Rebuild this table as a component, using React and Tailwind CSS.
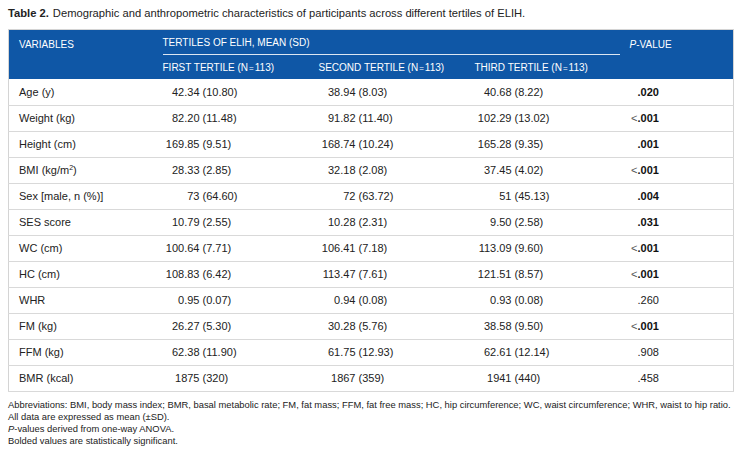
import React from 'react';

const rows = [
  { label: 'Age (y)', vals: [['42.34', '10.80'], ['38.94', '8.03'], ['40.68', '8.22']], p: '.020', bold: true },
  { label: 'Weight (kg)', vals: [['82.20', '11.48'], ['91.82', '11.40'], ['102.29', '13.02']], p: '.001', lt: true, bold: true },
  { label: 'Height (cm)', vals: [['169.85', '9.51'], ['168.74', '10.24'], ['165.28', '9.35']], p: '.001', bold: true },
  { label: 'BMI', sup: true, vals: [['28.33', '2.85'], ['32.18', '2.08'], ['37.45', '4.02']], p: '.001', lt: true, bold: true },
  { label: 'Sex [male, n (%)]', vals: [['73', '64.60'], ['72', '63.72'], ['51', '45.13']], p: '.004', bold: true },
  { label: 'SES score', vals: [['10.79', '2.55'], ['10.28', '2.31'], ['9.50', '2.58']], p: '.031', bold: true },
  { label: 'WC (cm)', vals: [['100.64', '7.71'], ['106.41', '7.18'], ['113.09', '9.60']], p: '.001', lt: true, bold: true },
  { label: 'HC (cm)', vals: [['108.83', '6.42'], ['113.47', '7.61'], ['121.51', '8.57']], p: '.001', lt: true, bold: true },
  { label: 'WHR', vals: [['0.95', '0.07'], ['0.94', '0.08'], ['0.93', '0.08']], p: '.260' },
  { label: 'FM (kg)', vals: [['26.27', '5.30'], ['30.28', '5.76'], ['38.58', '9.50']], p: '.001', lt: true, bold: true },
  { label: 'FFM (kg)', vals: [['62.38', '11.90'], ['61.75', '12.93'], ['62.61', '12.14']], p: '.908' },
  { label: 'BMR (kcal)', vals: [['1875', '320'], ['1867', '359'], ['1941', '440']], p: '.458' },
];

// mean right-aligned so the "(" lines up in each column
const Value = ({ mean, sd }) => (
  <div className="flex">
    <span className="w-[47px] text-right">{mean}</span>
    <span className="pl-[3px]">({sd})</span>
  </div>
);

const PValue = ({ p, lt, bold }) => (
  <div className="flex">
    <span className="w-[18px] text-right text-[#555] font-light">{lt ? '<' : ''}</span>
    <span className={bold ? 'font-bold text-[#111]' : ''}>{p}</span>
  </div>
);

export default function App() {
  return (
    <div
      className="w-[742px] h-[452px] bg-white px-[8px] pt-[6px] text-[#222]"
      style={{ fontFamily: '"Liberation Sans", Arial, sans-serif' }}
    >
      <p className="text-[11.2px] leading-[14px] text-[#222]">
        <span className="font-bold">Table 2.</span>
        <span className="pl-[4px]">Demographic and anthropometric characteristics of participants across different tertiles of ELIH.</span>
      </p>

      <table className="mt-[9px] w-[725px] border-collapse border border-[#d4d4d4] text-[11px] table-fixed">
        <colgroup>
          <col className="w-[144px]" />
          <col className="w-[156px]" />
          <col className="w-[156px]" />
          <col className="w-[155px]" />
          <col className="w-[114px]" />
        </colgroup>
        <thead className="bg-[#0f57a6] text-white text-[10px] uppercase text-left">
          <tr>
            <th rowSpan={2} className="align-top font-normal pl-[10px] pt-[7px]">Variables</th>
            <th colSpan={3} className="font-normal p-0 h-[25px] align-middle">
              <div className="ml-[10px] h-[25px] flex items-center border-b border-[#dce6f2]">
                Tertiles of ELIH, mean (SD)
              </div>
            </th>
            <th rowSpan={2} className="align-top font-normal pl-[10px] pt-[7px]">
              <i>P</i>-value
            </th>
          </tr>
          <tr className="h-[24px]">
            <th className="font-normal pl-[10px]">First tertile (N<span className="px-[1px] text-[8px]">=</span>113)</th>
            <th className="font-normal pl-[10px]">Second tertile (N<span className="px-[1px] text-[8px]">=</span>113)</th>
            <th className="font-normal pl-[10px]">Third tertile (N<span className="px-[1px] text-[8px]">=</span>113)</th>
          </tr>
        </thead>
        <tbody>
          {rows.map((r) => (
            <tr key={r.label} className="h-[26px] border-b border-[#d9d9d9]">
              <td className="pl-[10px]">
                {r.label}
                {r.sup && (
                  <span>
                    {' '}(kg/m<sup className="text-[7px]">2</sup>)
                  </span>
                )}
              </td>
              {r.vals.map(([mean, sd], i) => (
                <td key={i}>
                  <Value mean={mean} sd={sd} />
                </td>
              ))}
              <td>
                <PValue p={r.p} lt={r.lt} bold={r.bold} />
              </td>
            </tr>
          ))}
        </tbody>
      </table>

      <div className="mt-[7px] text-[9.4px] leading-[12px] text-[#222]">
        <p>Abbreviations: BMI, body mass index; BMR, basal metabolic rate; FM, fat mass; FFM, fat free mass; HC, hip circumference; WC, waist circumference; WHR, waist to hip ratio.</p>
        <p>All data are expressed as mean (±SD).</p>
        <p><i>P</i>-values derived from one-way ANOVA.</p>
        <p>Bolded values are statistically significant.</p>
      </div>
    </div>
  );
}
